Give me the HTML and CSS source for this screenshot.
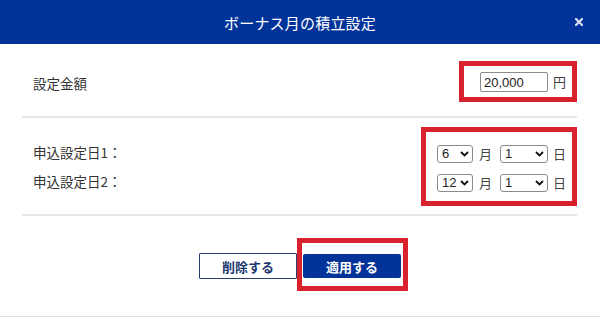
FILE: index.html
```html
<!DOCTYPE html>
<html lang="ja">
<head>
<meta charset="utf-8">
<title>ボーナス月の積立設定</title>
<link rel="stylesheet" href="styles.css">
</head>
<body>
<div class="dialog">
  <header class="header">
    <span></span>
    <h1 class="title">ボーナス月の積立設定</h1>
    <span class="close" aria-label="閉じる">
      <svg width="8" height="8" viewBox="0 0 8 8"><path d="M1 1L7 7M7 1L1 7" stroke="#dbe3f3" stroke-width="2.2" stroke-linecap="square"/></svg>
    </span>
  </header>
  <div class="content">
    <section class="section section-amount">
      <div class="label">設定金額</div>
      <div class="hl hl-amount">
        <input class="amount" type="text" value="20,000">
        <span class="unit">円</span>
      </div>
    </section>
    <section class="section section-dates">
      <div class="label labels">
        <div class="label-line">申込設定日1：</div>
        <div class="label-line">申込設定日2：</div>
      </div>
      <div class="hl hl-dates">
        <div class="date-row">
          <span class="sel sel-month"><select><option>6</option></select><svg class="chev" width="9" height="6" viewBox="0 0 9 6"><path d="M1 1L4.5 4.5L8 1" fill="none" stroke="#111" stroke-width="1.8"/></svg></span>
          <span class="unit u-month">月</span>
          <span class="sel sel-day"><select><option>1</option></select><svg class="chev" width="9" height="6" viewBox="0 0 9 6"><path d="M1 1L4.5 4.5L8 1" fill="none" stroke="#111" stroke-width="1.8"/></svg></span>
          <span class="unit">日</span>
        </div>
        <div class="date-row">
          <span class="sel sel-month"><select><option>12</option></select><svg class="chev" width="9" height="6" viewBox="0 0 9 6"><path d="M1 1L4.5 4.5L8 1" fill="none" stroke="#111" stroke-width="1.8"/></svg></span>
          <span class="unit u-month">月</span>
          <span class="sel sel-day"><select><option>1</option></select><svg class="chev" width="9" height="6" viewBox="0 0 9 6"><path d="M1 1L4.5 4.5L8 1" fill="none" stroke="#111" stroke-width="1.8"/></svg></span>
          <span class="unit">日</span>
        </div>
      </div>
    </section>
  </div>
  <footer class="footer">
    <button class="btn btn-delete" type="button">削除する</button>
    <div class="hl hl-apply">
      <button class="btn btn-apply" type="button">適用する</button>
    </div>
  </footer>
</div>
</body>
</html>
```

FILE: styles.css
```css
* { box-sizing: border-box; }
html, body { margin: 0; padding: 0; background: #fff; }
body {
  font-family: "Noto Sans CJK JP", "Noto Sans", sans-serif;
  color: #333;
}
.dialog { width: 600px; height: 317px; background: #fff; }

.header {
  height: 44px;
  background: #023399;
  display: grid;
  grid-template-columns: 1fr auto 1fr;
  align-items: center;
}
.title {
  margin: 0;
  font-size: 15px;
  font-weight: normal;
  color: #fff;
  line-height: 1;
  letter-spacing: 0.2px;
}
.close {
  justify-self: end;
  margin-right: 17px;
  display: flex;
}

.content { padding: 0 23px 0 22px; }
.section {
  display: flex;
  justify-content: space-between;
  align-items: center;
  border-bottom: 2px solid #e6e6e6;
}
.section-amount { height: 74px; padding-top: 3px; }
.section-dates { height: 98px; padding-top: 1px; }
.label {
  padding-left: 11px;
  font-size: 13.5px;
  color: #333;
  line-height: 20px;
}
.section-amount .label { margin-top: 2px; }
.labels {
  display: flex;
  flex-direction: column;
  gap: 9px;
}

.hl { border: 5px solid #d8222d; display: flex; }
.hl-amount {
  width: 118px;
  height: 41px;
  padding: 6px 6px 5px 16px;
  align-items: center;
}
.amount {
  width: 68px;
  height: 20px;
  border: 1px solid #8c8c8c;
  border-radius: 2px;
  padding: 0 3px;
  margin: 0 5px 0 0;
  font: 13px "Liberation Sans", Arial, sans-serif;
  color: #222;
  background: #fff;
}
.unit {
  width: 13px;
  font-size: 13px;
  line-height: 18px;
  color: #444;
  display: inline-block;
}

.hl-dates {
  width: 156px;
  height: 79px;
  padding: 13px 6px 9px 11px;
  flex-direction: column;
  gap: 11px;
}
.date-row { display: flex; align-items: center; height: 18px; }
.sel { position: relative; display: inline-flex; }
.sel select {
  appearance: none;
  -webkit-appearance: none;
  height: 18px;
  border: 1px solid #8a8a8a;
  border-radius: 3px;
  background: #fff;
  padding: 0 0 0 4px;
  margin: 0;
  font: 13px "Liberation Sans", Arial, sans-serif;
  color: #222;
  line-height: 16px;
}
.sel-month select { width: 36px; }
.sel-day select { width: 48px; }
.sel-month { margin-right: 6px; }
.sel-day { margin-right: 5px; }
.u-month { margin-right: 8px; }
.chev {
  position: absolute;
  right: 4px;
  top: 6px;
  pointer-events: none;
}

.footer {
  height: 101px;
  border-bottom: 1px solid #e2e2e2;
  display: flex;
  justify-content: center;
  align-items: flex-start;
  padding: 22px 0 0 7px;
}
.btn {
  font-family: "Noto Sans CJK JP", sans-serif;
  font-weight: bold;
  font-size: 13px;
  margin: 0;
  cursor: pointer;
}
.btn-delete {
  width: 98px;
  height: 26px;
  margin-top: 15px;
  background: #fff;
  color: #1d3770;
  border: 1px solid #2a3d6c;
  border-radius: 1px;
}
.hl-apply {
  width: 111px;
  height: 53px;
  padding: 11px 2px 8px 1px;
}
.btn-apply {
  width: 98px;
  height: 24px;
  background: #023399;
  color: #fff;
  border: none;
  border-radius: 2px;
}
```
